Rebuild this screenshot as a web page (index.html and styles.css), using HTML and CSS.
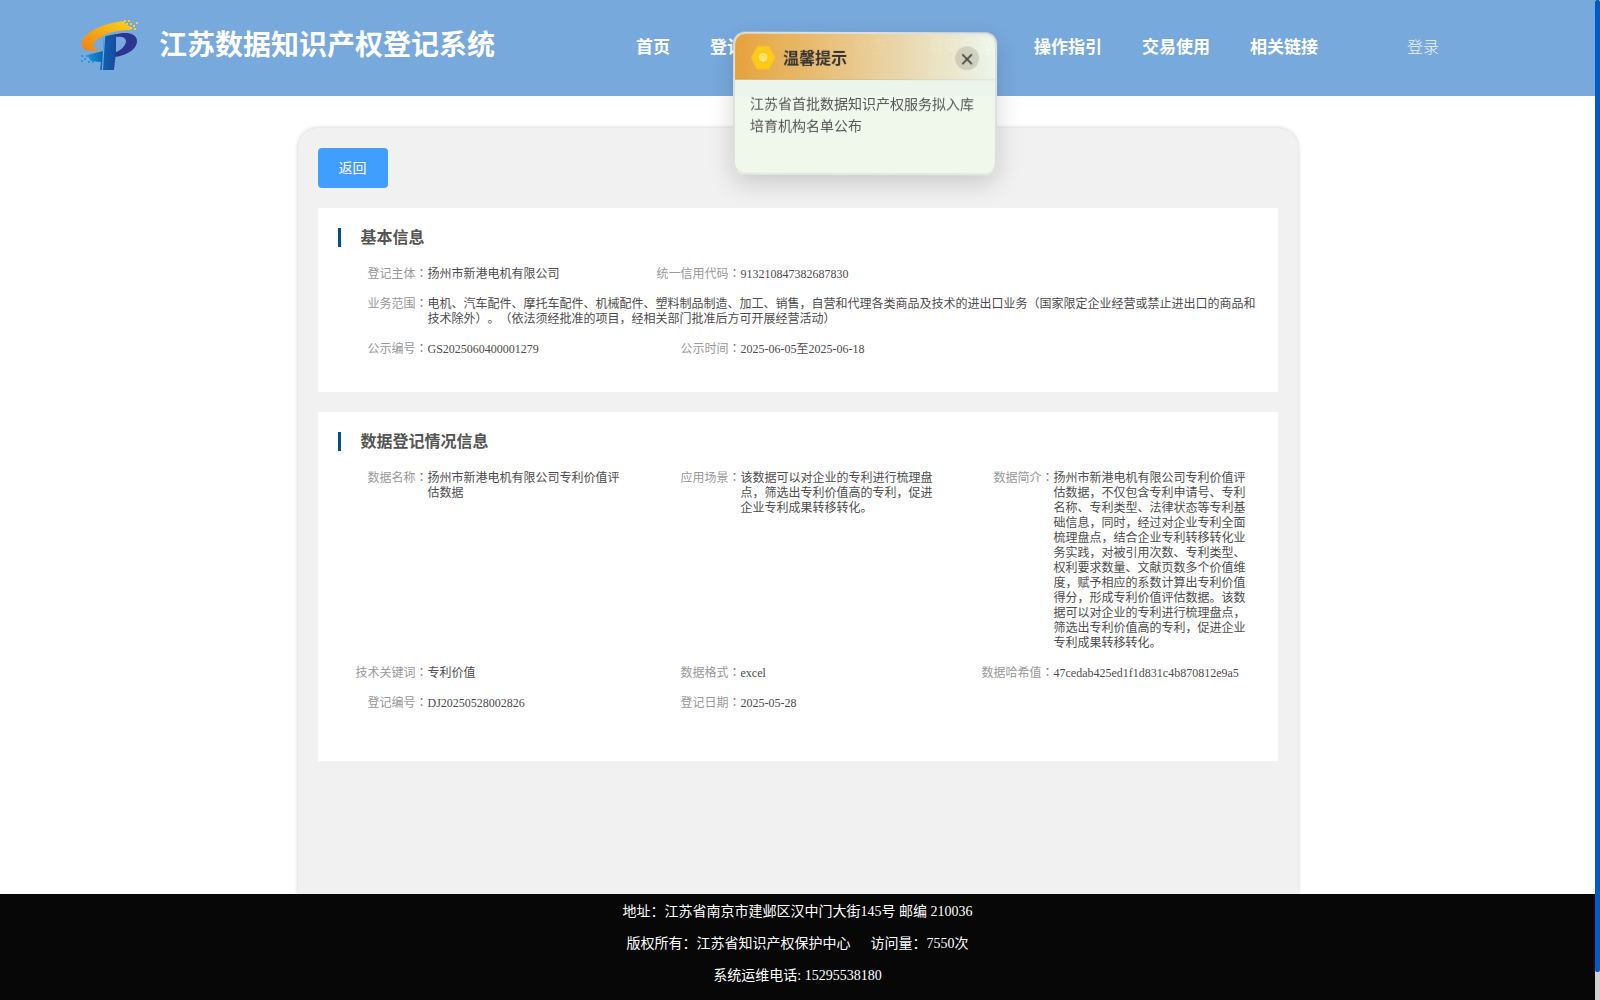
FILE: index.html
```html
<!DOCTYPE html>
<html lang="zh-CN">
<head>
    <meta charset="UTF-8">
    <meta name="viewport" content="width=device-width, initial-scale=1.0">
    <title>江苏数据知识产权登记系统</title>
    <link rel="stylesheet" href="styles.css">
</head>
<body>
    <div class="page">
        <!-- Header -->
        <header class="header">
            <svg class="logo" viewBox="0 0 60 52" width="60" height="52">
                <defs>
                    <linearGradient id="orange" x1="0" y1="1" x2="1" y2="0">
                        <stop offset="0" stop-color="#f07f13"/>
                        <stop offset="1" stop-color="#fbd41c"/>
                    </linearGradient>
                    <linearGradient id="blue" x1="0" y1="0" x2="1" y2="0">
                        <stop offset="0" stop-color="#1698d8"/>
                        <stop offset="0.6" stop-color="#0c5fae"/>
                        <stop offset="1" stop-color="#1a4aa0"/>
                    </linearGradient>
                </defs>
                <path fill="url(#orange)" d="M44 1C25 3 5 11 2 22c-2 7 5 10 18 9C10 29 12 22 21 17c8-5 19-7 29-7l3-2-4-2-3-1z"/>
                <path fill="#f7cf28" d="M44 0h2v2h-2zM48 0h2v2h-2zM46 3h2v2h-2zM50 3h2v2h-2zM53 5h2v2h-2zM50 7h2v2h-2zM56 2h2v2h-2zM54 8h2v2h-2z"/>
                <path fill="#2c3690" d="M34 15c11-4 23-2 23 6 0 9-12 15-23 16v-4c6-2 12-7 12-12 0-4-5-5-12-4z"/>
                <path fill="url(#blue)" d="M26 16l10-2v18l-2 18H20l1-8-10-1-4-6 16-4 1-14z"/>
                <path fill="#78a9dd" d="M24 16h1.2L23 50h-1.2z"/>
                <path fill="#239bdc" d="M1 35h2v2H1zM4 38h2v2H4zM6 35h2v2H6zM1 40h2v2H1zM8 41h2v2H8zM12 41h2v2h-2z"/>
            </svg>
            <h1 class="site-name">江苏数据知识产权登记系统</h1>
            <nav class="nav">
                <a>首页</a>
                <a>登记流程</a>
                <a>公示公告</a>
                <a>常见问题</a>
                <a>操作指引</a>
                <a>交易使用</a>
                <a>相关链接</a>
            </nav>
            <a class="login">登录</a>
        </header>

        <!-- Detail -->
        <main class="main">
            <button class="btn">返回</button>

            <section class="panel panel-basic">
                <h2 class="panel-title">基本信息</h2>
                <div class="info">
                    <div class="item"><label>登记主体<i lang="zh-TW">：</i></label><span>扬州市新港电机有限公司</span></div>
                    <div class="item wide"><label>统一信用代码<i lang="zh-TW">：</i></label><span>913210847382687830</span></div>
                    <div class="item full"><label>业务范围<i lang="zh-TW">：</i></label><span>电机、汽车配件、摩托车配件、机械配件、塑料制品制造、加工、销售，自营和代理各类商品及技术的进出口业务（国家限定企业经营或禁止进出口的商品和<br>技术除外）。（依法须经批准的项目，经相关部门批准后方可开展经营活动）</span></div>
                    <div class="item"><label>公示编号<i lang="zh-TW">：</i></label><span>GS2025060400001279</span></div>
                    <div class="item wide"><label>公示时间<i lang="zh-TW">：</i></label><span>2025-06-05至2025-06-18</span></div>
                </div>
            </section>

            <section class="panel panel-data">
                <h2 class="panel-title">数据登记情况信息</h2>
                <div class="info">
                    <div class="item"><label>数据名称<i lang="zh-TW">：</i></label><span>扬州市新港电机有限公司专利价值评估数据</span></div>
                    <div class="item"><label>应用场景<i lang="zh-TW">：</i></label><span>该数据可以对企业的专利进行梳理盘点，筛选出专利价值高的专利，促进企业专利成果转移转化。</span></div>
                    <div class="item"><label>数据简介<i lang="zh-TW">：</i></label><span>扬州市新港电机有限公司专利价值评估数据，不仅包含专利申请号、专利名称、专利类型、法律状态等专利基础信息，同时，经过对企业专利全面梳理盘点，结合企业专利转移转化业务实践，对被引用次数、专利类型、权利要求数量、文献页数多个价值维度，赋予相应的系数计算出专利价值得分，形成专利价值评估数据。该数据可以对企业的专利进行梳理盘点，筛选出专利价值高的专利，促进企业专利成果转移转化。</span></div>
                    <div class="item"><label>技术关键词<i lang="zh-TW">：</i></label><span>专利价值</span></div>
                    <div class="item"><label>数据格式<i lang="zh-TW">：</i></label><span>excel</span></div>
                    <div class="item"><label>数据哈希值<i lang="zh-TW">：</i></label><span>47cedab425ed1f1d831c4b870812e9a5</span></div>
                    <div class="item"><label>登记编号<i lang="zh-TW">：</i></label><span>DJ20250528002826</span></div>
                    <div class="item"><label>登记日期<i lang="zh-TW">：</i></label><span>2025-05-28</span></div>
                </div>
            </section>
        </main>

        <!-- Footer -->
        <footer class="footer">
            <p>地址：江苏省南京市建邺区汉中门大街145号 邮编 210036</p>
            <p>版权所有：江苏省知识产权保护中心<span class="visits">访问量：7550次</span></p>
            <p>系统运维电话: 15295538180</p>
        </footer>
    </div>

    <div class="scrollbar"><div class="thumb"></div></div>

    <!-- Floating notice -->
    <div class="notice">
        <div class="notice-head">
            <svg width="24" height="24" viewBox="0 0 24 24">
                <path fill="#ffc917" d="M6 .5h12l6 11.5-6 11.5H6L0 12z"/>
                <circle cx="12" cy="11.5" r="3.6" fill="#ffd84f" stroke="#fff0b5"/>
                <path d="M10.3 11l1.7 1.6 1.7-1.6M12 12.6V16" fill="none" stroke="#fff0b5"/>
            </svg>
            <b>温馨提示</b>
            <span class="close">
                <svg width="12" height="12" viewBox="0 0 12 12"><path d="M1.2 1.2l9.6 9.6M10.8 1.2l-9.6 9.6" stroke="#484840" stroke-width="1.7"/></svg>
            </span>
        </div>
        <p class="notice-text">江苏省首批数据知识产权服务拟入库培育机构名单公布</p>
    </div>
</body>
</html>
```
FILE: styles.css
```css
* {
    box-sizing: border-box;
}
body {
    margin: 0;
    height: 1000px;
    overflow: hidden;
    display: flex;
    background: #fff;
    font-family: "Liberation Serif", "Noto Sans CJK SC", serif;
    text-spacing-trim: space-all;
}
h1, h2, p {
    margin: 0;
}
.page {
    width: 1595px;
    height: 1000px;
    display: flex;
    flex-direction: column;
}
.header {
    height: 96px;
    flex-shrink: 0;
    display: flex;
    align-items: center;
    padding: 0 156px 4px 80px;
    background: #78a9dd;
    color: #fff;
    white-space: nowrap;
}
.logo {
    width: 60px;
    height: 52px;
}
.site-name {
    width: 477px;
    margin-left: 19px;
    font-size: 28px;
    line-height: 40px;
}
.nav {
    display: flex;
    gap: 40px;
    padding-bottom: 2px;
    font-size: 17px;
    font-weight: bold;
}
.login {
    margin-left: auto;
    font-size: 16px;
    font-weight: 300;
    opacity: 0.85;
}

.main {
    width: 1000px;
    flex: 1;
    min-height: 0;
    margin: 32px auto 0;
    padding: 20px;
    background: #f1f1f1;
    border-radius: 20px 20px 0 0;
    box-shadow: 0 0 4px rgba(0, 0, 0, 0.2);
}
.btn {
    display: block;
    width: 70px;
    height: 40px;
    padding: 0 0 2px;
    border: none;
    border-radius: 4px;
    background: #409eff;
    color: #fff;
    font-family: inherit;
    font-size: 14px;
}
.panel {
    margin-top: 20px;
    padding: 20px;
    background: #fff;
}
.panel-basic {
    height: 184px;
}
.panel-data {
    height: 349px;
}
.panel-title {
    height: 19px;
    padding-left: 20px;
    border-left: 3px solid #00508f;
    color: #555;
    font-size: 16px;
    line-height: 20px;
}
.info {
    display: grid;
    grid-template-columns: 313px 313px 1fr;
    row-gap: 15px;
    margin-top: 20px;
    font-size: 12px;
    line-height: 15px;
    color: #4d4d4d;
}
.item {
    display: flex;
}
.item label {
    width: 90px;
    flex-shrink: 0;
    text-align: right;
    white-space: nowrap;
    color: #999;
}
.item i {
    color: #777;
    font-family: "Noto Sans CJK TC", sans-serif;
    font-style: normal;
    line-height: 1;
}
.item span {
    width: 193px;
}
.item.wide {
    grid-column: span 2;
}
.item.full {
    grid-column: span 3;
}
.item.full span {
    width: auto;
    white-space: nowrap;
}

.footer {
    height: 106px;
    flex-shrink: 0;
    padding-top: 2px;
    background: #070707;
    color: #fff;
    text-align: center;
    font-size: 14px;
    line-height: 32px;
}
.visits {
    margin-left: 20px;
}

.scrollbar {
    width: 5px;
    background: #d0d0d0;
}
.thumb {
    height: 972px;
    border-radius: 2px;
    background: #005bc5;
}

.notice {
    position: absolute;
    left: 733px;
    top: 32px;
    width: 264px;
    height: 143px;
    border: 2px solid #dcdfdc;
    border-bottom-color: #e3e8e0;
    border-radius: 12px;
    overflow: hidden;
    background: rgba(239, 248, 235, 0.96);
    box-shadow: 0 8px 24px rgba(0, 0, 0, 0.17);
    transform: perspective(2000px) rotateX(-0.15deg) rotate(0.15deg);
}
.notice-head {
    height: 46px;
    display: flex;
    align-items: center;
    padding: 2px 16px 0 16px;
    border-bottom: 1px solid rgba(0, 0, 0, 0.06);
    background: linear-gradient(90deg, #e6a23c, rgba(230, 162, 60, 0));
    color: #333;
    font-size: 16px;
}
.notice-head b {
    margin-left: 8px;
    padding-bottom: 1px;
}
.close {
    width: 24px;
    height: 24px;
    margin-left: auto;
    display: flex;
    align-items: center;
    justify-content: center;
    padding-top: 3px;
    border-radius: 50%;
    background: rgba(0, 0, 0, 0.12);
}
.notice-text {
    width: 240px;
    padding: 14px 0 0 15px;
    color: #555;
    font-size: 14px;
    line-height: 22px;
}
```
